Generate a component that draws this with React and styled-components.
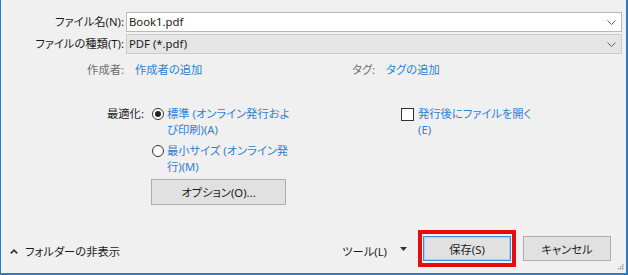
import React from "react";
import styled, { createGlobalStyle } from "styled-components";

const Global = createGlobalStyle`
  html, body { margin: 0; padding: 0; background: #f0f0f0; }
  * { box-sizing: border-box; }
`;

const BLUE = "#2b7bc4";
const LINK = "#2f7fd4";

const Window = styled.div`
  position: relative;
  width: 628px;
  height: 275px;
  background: #f0f0f0;
  border-left: 1px solid ${BLUE};
  border-right: 2px solid ${BLUE};
  border-bottom: 2px solid ${BLUE};
  display: flex;
  flex-direction: column;
  font-family: "Noto Sans", "Noto Sans CJK JP", sans-serif;
  font-size: 11.3px;
  line-height: 16px;
  color: #1b1b1b;
  font-feature-settings: "palt";
`;

const FileGrid = styled.div`
  display: grid;
  grid-template-columns: 123px 1fr;
  column-gap: 2px;
  row-gap: 2px;
  padding: 12px 4px 0 0;
`;

const FieldLabel = styled.div`
  text-align: right;
  line-height: 20px;
  white-space: nowrap;
`;

const Field = styled.div`
  height: 20px;
  display: flex;
  align-items: center;
  justify-content: space-between;
  padding: 0 5px 0 2px;
  background: ${(p) => (p.$combo ? "#e5e5e5" : "#ffffff")};
  border: 1px solid ${(p) => (p.$combo ? "#cccccc" : "#b9b9b9")};
  white-space: nowrap;
`;

const MetaRow = styled.div`
  display: grid;
  grid-template-columns: 123px 206px auto auto;
  column-gap: 11px;
  justify-content: start;
  margin-top: 8px;
  white-space: nowrap;
`;

const MetaLabel = styled.div`
  color: #6d6d6d;
  text-align: ${(p) => (p.$right ? "right" : "left")};
`;

const LinkText = styled.div`
  color: ${LINK};
`;

const OptionsRow = styled.div`
  display: grid;
  grid-template-columns: 294px auto;
  margin-top: 28px;
  padding-left: 106px;
`;

const OptGroup = styled.div`
  display: grid;
  grid-template-columns: 42px auto;
  column-gap: 3px;
  align-items: start;
`;

const OptLabel = styled.div`
  white-space: nowrap;
`;

const OptColumn = styled.div`
  display: flex;
  flex-direction: column;
  gap: 5px;
  align-items: flex-start;
`;

const RadioItem = styled.div`
  display: flex;
  gap: 3px;
  color: ${LINK};
  white-space: nowrap;
`;

const RadioCircle = styled.span`
  flex: none;
  width: 12px;
  height: 12px;
  margin-top: 2px;
  border: 1px solid #333333;
  border-radius: 50%;
  background: #ffffff;
  display: flex;
  align-items: center;
  justify-content: center;
  &::after {
    content: "";
    display: ${(p) => (p.$checked ? "block" : "none")};
    width: 6px;
    height: 6px;
    border-radius: 50%;
    background: #222222;
  }
`;

const Button = styled.button`
  font: inherit;
  font-feature-settings: "palt";
  color: #1b1b1b;
  background: #e1e1e1;
  border: 1px solid #adadad;
  padding: 2px 0 0;
  margin: 0;
  display: flex;
  align-items: center;
  justify-content: center;
  white-space: nowrap;
`;

const OptionButton = styled(Button)`
  width: 135px;
  height: 26px;
  margin-left: -1px;
  margin-top: -1px;
  padding-top: 1px;
`;

const CheckItem = styled.div`
  display: flex;
  gap: 4px;
  color: ${LINK};
  white-space: nowrap;
`;

const CheckBox = styled.span`
  flex: none;
  width: 13px;
  height: 13px;
  margin-top: 2px;
  border: 1px solid #333333;
  background: #ffffff;
`;

const BottomBar = styled.div`
  margin-top: auto;
  margin-bottom: 6px;
  height: 37px;
  display: flex;
  align-items: center;
  justify-content: space-between;
  padding: 0 15px 0 9px;
`;

const ToggleFolders = styled.div`
  display: flex;
  align-items: center;
  gap: 7px;
  padding-top: 6px;
  white-space: nowrap;
`;

const RightGroup = styled.div`
  display: flex;
  align-items: center;
`;

const ToolsText = styled.div`
  padding-top: 6px;
  margin-right: 13px;
  white-space: nowrap;
`;

const DropArrow = styled.svg`
  display: block;
  margin-right: 11px;
`;

const Highlight = styled.div`
  border: 4px solid #e50d0d;
  padding: 2px 1px;
  display: flex;
`;

const SaveButton = styled(Button)`
  width: 88px;
  height: 25px;
  border-color: #3d8ee0;
  box-shadow: inset 0 0 0 1px #a9cff2;
`;

const CancelButton = styled(Button)`
  width: 88px;
  height: 25px;
  margin-left: 7px;
`;

const Grip = styled.svg`
  position: absolute;
  right: 2px;
  bottom: 3px;
`;

const Chevron = () => (
  <svg width="9" height="5" viewBox="0 0 9 5">
    <path d="M0.5 0.5 L4.5 4.5 L8.5 0.5" fill="none" stroke="#606060" strokeWidth="1" />
  </svg>
);

export default function App() {
  return (
    <>
      <Global />
      <Window>
        <FileGrid>
          <FieldLabel>ファイル名(N):</FieldLabel>
          <Field>
            <span>Book1.pdf</span>
            <Chevron />
          </Field>
          <FieldLabel>ファイルの種類(T):</FieldLabel>
          <Field $combo>
            <span>PDF (*.pdf)</span>
            <Chevron />
          </Field>
        </FileGrid>

        <MetaRow>
          <MetaLabel $right>作成者:</MetaLabel>
          <LinkText>作成者の追加</LinkText>
          <MetaLabel>タグ:</MetaLabel>
          <LinkText>タグの追加</LinkText>
        </MetaRow>

        <OptionsRow>
          <OptGroup>
            <OptLabel>最適化:</OptLabel>
            <OptColumn>
              <RadioItem>
                <RadioCircle $checked />
                <span>
                  標準 (オンライン発行およ
                  <br />
                  び印刷)(A)
                </span>
              </RadioItem>
              <RadioItem>
                <RadioCircle />
                <span>
                  最小サイズ (オンライン発
                  <br />
                  行)(M)
                </span>
              </RadioItem>
              <OptionButton>オプション(O)...</OptionButton>
            </OptColumn>
          </OptGroup>
          <CheckItem>
            <CheckBox />
            <span>
              発行後にファイルを開く
              <br />
              (E)
            </span>
          </CheckItem>
        </OptionsRow>

        <BottomBar>
          <ToggleFolders>
            <svg width="8" height="5" viewBox="0 0 8 5">
              <path d="M0.8 4.4 L4 1.2 L7.2 4.4" fill="none" stroke="#333333" strokeWidth="1.6" />
            </svg>
            <span>フォルダーの非表示</span>
          </ToggleFolders>
          <RightGroup>
            <ToolsText>ツール(L)</ToolsText>
            <DropArrow width="7" height="4" viewBox="0 0 7 4">
              <path d="M0 0 H7 L3.5 4 Z" fill="#333333" />
            </DropArrow>
            <Highlight>
              <SaveButton>保存(S)</SaveButton>
            </Highlight>
            <CancelButton>キャンセル</CancelButton>
          </RightGroup>
        </BottomBar>

        <Grip width="7" height="7" viewBox="0 0 7 7">
          <g fill="#a8a8a8">
            <rect x="5" y="1" width="1.5" height="1.5" />
            <rect x="3" y="3" width="1.5" height="1.5" />
            <rect x="5" y="3" width="1.5" height="1.5" />
            <rect x="1" y="5" width="1.5" height="1.5" />
            <rect x="3" y="5" width="1.5" height="1.5" />
            <rect x="5" y="5" width="1.5" height="1.5" />
          </g>
        </Grip>
      </Window>
    </>
  );
}
